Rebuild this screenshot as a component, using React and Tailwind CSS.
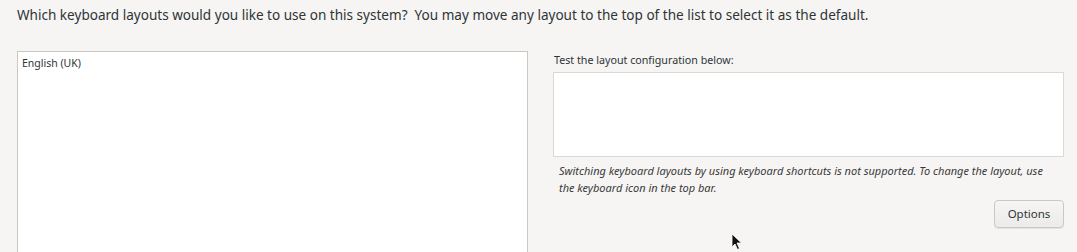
import React from "react";

export default function App() {
  return (
    <div className="relative w-[1077px] h-[252px] overflow-hidden bg-[#f6f5f4] text-[#2e3436]" style={{ fontFamily: '"Noto Sans", sans-serif' }}>
      <div className="pl-[17px] pt-[6px] text-[13.55px] leading-[19px]">
        Which keyboard layouts would you like to use on this system?&nbsp; You may move any layout to the top of the list to select it as the default.
      </div>
      <div className="flex gap-[25px] pl-[17px] pt-[26px]">
        <div className="w-[511px] h-[220px] bg-white border border-[#cdc7c2] pl-[4px] pt-[4px] text-[10.5px] leading-[15px]">
          English (UK)
        </div>
        <div className="w-[511px] flex flex-col">
          <div className="text-[10.7px] leading-[14px] pl-[1px] pt-[2px] text-[#2e3436]">Test the layout configuration below:</div>
          <div className="mt-[5px] h-[85px] bg-white border border-[#dcd8d5]"></div>
          <div className="mt-[5px] pl-[6px] w-[500px] text-[11px] leading-[17px] italic text-[#3a3a3a]">
            Switching keyboard layouts by using keyboard shortcuts is not supported. To change the layout, use the keyboard icon in the top bar.
          </div>
          <div className="flex justify-end mt-[4px]">
            <button className="w-[70px] h-[28px] rounded-[4px] border border-[#cdc7c2] bg-gradient-to-b from-[#f6f5f4] to-[#edebe9] text-[11.5px] text-[#2e3436] shadow-[0_1px_0_rgba(0,0,0,0.07)]">
              Options
            </button>
          </div>
        </div>
      </div>
      <svg className="absolute left-[731px] top-[233px]" width="12" height="18" viewBox="0 0 12 18">
        <path d="M1 1 L1 14 L4 11 L6.5 16.5 L8.5 15.5 L6 10 L10.5 10 Z" fill="#111" stroke="#fff" strokeWidth="0.8" />
      </svg>
    </div>
  );
}
